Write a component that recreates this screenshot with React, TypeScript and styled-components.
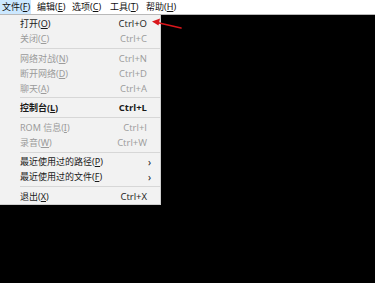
import React from "react";
import styled, { createGlobalStyle } from "styled-components";

const Global = createGlobalStyle`
  html, body { margin: 0; padding: 0; background: #000; }
  body { width: 375px; height: 283px; overflow: hidden; font-family: "Noto Sans", "Noto Sans CJK SC", sans-serif; }
`;

const Screen = styled.div`
  width: 375px;
  height: 283px;
  background: #000;
  display: flex;
  flex-direction: column;
  position: relative;
`;

const MenuBar = styled.div`
  height: 14px;
  background: #fff;
  border-bottom: 1px solid #b9b9b9;
  display: flex;
  align-items: stretch;
  gap: 4px;
`;

const BarItem = styled.div<{ $active?: boolean; $w: number }>`
  width: ${(p) => p.$w}px;
  box-sizing: border-box;
  padding-left: 2px;
  font-size: 9px;
  line-height: 14px;
  color: #111;
  background: ${(p) => (p.$active ? "#cce8ff" : "transparent")};
  white-space: nowrap;
`;

const Dropdown = styled.div`
  width: 161px;
  box-sizing: border-box;
  background: #f2f2f2;
  border-right: 1px solid #cfcfcf;
  border-bottom: 1px solid #cfcfcf;
  padding: 1px 0 0 0;
  display: flex;
  flex-direction: column;
`;

const Row = styled.div<{ $disabled?: boolean; $bold?: boolean }>`
  height: 15px;
  display: flex;
  align-items: center;
  padding-left: 20px;
  padding-right: 13px;
  font-size: 9px;
  color: ${(p) => (p.$disabled ? "#9b9b9b" : "#1a1a1a")};
  font-weight: ${(p) => (p.$bold ? 700 : 400)};
  white-space: nowrap;
`;

const Label = styled.span`
  flex: 1;
`;

const Shortcut = styled.span`
  font-family: "Open Sans", "Noto Sans", sans-serif;
  font-size: 9.5px;
`;

const Arrow = styled.span`
  font-size: 10px;
  margin-right: -4px;
`;

const Sep = styled.div`
  height: 4.6px;
  display: flex;
  align-items: center;
  padding-left: 20px;
  &::after {
    content: "";
    flex: 1;
    height: 1px;
    background: #d7d7d7;
  }
`;

const U = styled.span`
  text-decoration: underline;
`;

const Pointer = styled.svg`
  position: absolute;
  left: 148px;
  top: 15px;
`;

type Item =
  | { sep: true }
  | { sep?: false; label: string; key: string; sc?: string; dis?: boolean; bold?: boolean; sub?: boolean };

const items: Item[] = [
  { label: "打开", key: "O", sc: "Ctrl+O" },
  { label: "关闭", key: "C", sc: "Ctrl+C", dis: true },
  { sep: true },
  { label: "网络对战", key: "N", sc: "Ctrl+N", dis: true },
  { label: "断开网络", key: "D", sc: "Ctrl+D", dis: true },
  { label: "聊天", key: "A", sc: "Ctrl+A", dis: true },
  { sep: true },
  { label: "控制台", key: "L", sc: "Ctrl+L", bold: true },
  { sep: true },
  { label: "ROM 信息", key: "I", sc: "Ctrl+I", dis: true },
  { label: "录音", key: "W", sc: "Ctrl+W", dis: true },
  { sep: true },
  { label: "最近使用过的路径", key: "P", sub: true },
  { label: "最近使用过的文件", key: "F", sub: true },
  { sep: true },
  { label: "退出", key: "X", sc: "Ctrl+X" },
];

const bar = [
  { t: "文件", k: "F", w: 31 },
  { t: "编辑", k: "E", w: 31 },
  { t: "选项", k: "C", w: 34 },
  { t: "工具", k: "T", w: 32 },
  { t: "帮助", k: "H", w: 40 },
];

export default function App() {
  return (
    <Screen>
      <Global />
      <MenuBar>
        {bar.map((b, i) => (
          <BarItem key={b.t} $w={b.w} $active={i === 0}>
            {b.t}(<U>{b.k}</U>)
          </BarItem>
        ))}
      </MenuBar>
      <Dropdown>
        {items.map((it, i) =>
          it.sep ? (
            <Sep key={i} />
          ) : (
            <Row key={i} $disabled={it.dis} $bold={it.bold}>
              <Label>
                {it.label}(<U>{it.key}</U>)
              </Label>
              {it.sc && <Shortcut>{it.sc}</Shortcut>}
              {it.sub && <Arrow>›</Arrow>}
            </Row>
          )
        )}
      </Dropdown>
      <Pointer width="36" height="20" viewBox="0 0 36 20">
        <line x1="33" y1="13" x2="9" y2="7.5" stroke="#d9161b" strokeWidth="1.6" strokeLinecap="round" />
        <polygon points="4,6.5 12,3.5 10.5,10.5" fill="#d9161b" />
      </Pointer>
    </Screen>
  );
}
